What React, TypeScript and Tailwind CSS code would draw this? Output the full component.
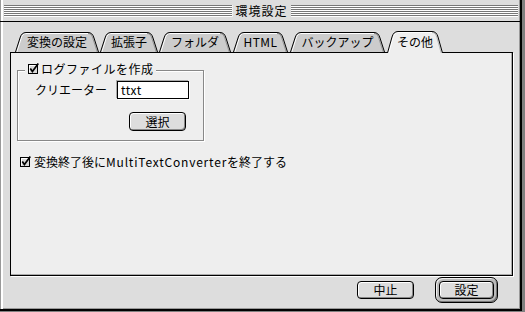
import React from "react";

const tabs = [
  { label: "変換の設定", w: 84, cls: "w-[84px] ml-0" },
  { label: "拡張子", w: 58, cls: "w-[58px] ml-[1px]" },
  { label: "フォルダ", w: 72, cls: "w-[72px] ml-[1px]" },
  { label: "HTML", w: 55, cls: "w-[55px] ml-[2px]" },
  { label: "バックアップ", w: 95, cls: "w-[95px] ml-[2px]" },
  { label: "その他", w: 56, cls: "w-[56px] ml-[2px]", selected: true },
];

function Tab({ label, w, cls, selected }: { label: string; w: number; cls: string; selected?: boolean }) {
  const H = selected ? 22 : 20;
  const d = `M0.5 ${H} L5 6 Q6.5 0.5 11 0.5 L${w - 11} 0.5 Q${w - 6.5} 0.5 ${w - 5} 6 L${w - 0.5} ${H}`;
  const hl = `M1.8 ${H} L6.2 6.3 Q7.5 1.5 11 1.5 L${w - 11} 1.5`;
  const sh = `M${w - 11} 1.5 Q${w - 7.5} 1.5 ${w - 6.2} 6.3 L${w - 1.8} ${H}`;
  return (
    <div
      className={`relative flex items-center justify-center shrink-0 ${cls} ${
        selected ? "h-[22px] -mb-[1px] z-10" : "h-[20px]"
      }`}
    >
      <svg className="absolute inset-0" width={w} height={H} viewBox={`0 0 ${w} ${H}`}>
        <path d={d + " Z"} fill={selected ? "#eeeeee" : "#cccccc"} stroke="none" />
        <path d={hl} fill="none" stroke="#ffffff" strokeWidth="1" />
        <path d={sh} fill="none" stroke={selected ? "#bbbbbb" : "#999999"} strokeWidth="1" />
        <path d={d} fill="none" stroke="#000" strokeWidth="1" />
      </svg>
      <span className={`relative text-[12px] leading-none text-black ${label === "HTML" ? "tracking-[0.5px]" : ""}`}>
        {label}
      </span>
    </div>
  );
}

function Check() {
  return (
    <svg width="12" height="12" viewBox="0 0 12 12" className="shrink-0">
      <rect x="0.5" y="1.5" width="9" height="9" fill="#d8d8d8" stroke="#000" />
      <path d="M1.5 9.5 V2.5 H8.5" stroke="#fff" fill="none" />
      <path d="M2.3 5.6 L4.4 8.6 L10.3 0.6" stroke="#000" strokeWidth="1.7" fill="none" />
    </svg>
  );
}

function Button({ label, cls }: { label: string; cls: string }) {
  return (
    <div
      className={`flex items-center justify-center rounded-[4px] border border-black bg-[#dddddd] shadow-[inset_1px_1px_0_#ffffff,inset_-1px_-1px_0_#888888] text-[12px] leading-none text-black ${cls}`}
    >
      {label}
    </div>
  );
}

export default function App() {
  return (
    <div className="w-[525px] h-[312px] bg-[#808080] font-['Noto_Sans_CJK_JP',sans-serif]">
      <div className="w-[522px] h-[311px] bg-[#dddddd] border-r-2 border-b-2 border-black flex flex-col shadow-[inset_1px_0_0_#999999,inset_3px_0_0_#ffffff,inset_-1px_-1px_0_#999999]">
        {/* title bar */}
        <div className="h-[22px] shrink-0 border-b border-black flex items-center pl-[4px] pr-[2px]">
          <div className="flex-1 h-[12px] bg-[repeating-linear-gradient(to_bottom,#777777_0px,#777777_1px,#ffffff_1px,#ffffff_2px)] border-r border-[#eeeeee]" />
          <div className="px-[3px] text-[12px] leading-none tracking-[1px] text-black">環境設定</div>
          <div className="flex-1 h-[12px] bg-[repeating-linear-gradient(to_bottom,#777777_0px,#777777_1px,#ffffff_1px,#ffffff_2px)]" />
        </div>

        {/* content */}
        <div className="flex-1 flex flex-col pl-[10px] pr-[7px] pt-[9px]">
          <div className="relative z-10 flex items-end h-[21px] pl-[5px]">
            {tabs.map((t) => (
              <Tab key={t.label} {...t} />
            ))}
          </div>

          <div className="h-[224px] shrink-0 border border-black bg-[#eeeeee] shadow-[inset_-1px_-1px_0_#aaaaaa,1px_1px_0_#ffffff] flex flex-col items-start">
            {/* group box */}
            <div className="ml-[6px] mt-[17px] w-[187px] h-[71px] border border-[#888888] shadow-[inset_1px_1px_0_#ffffff,1px_1px_0_#ffffff] flex flex-col items-start">
              <div className="-mt-[8px] ml-[7px] h-[12px] flex items-center gap-[1px] pl-[3px] pr-[2px] bg-[#eeeeee]">
                <Check />
                <span className="text-[12px] leading-none tracking-[0.5px] text-black">ログファイルを作成</span>
              </div>
              <div className="mt-[6px] ml-[17px] flex items-center">
                <span className="w-[82px] text-[12px] leading-none text-black">クリエーター</span>
                <div className="w-[72px] h-[18px] border border-black bg-white flex items-center pl-[3px] text-[12px] leading-none tracking-[0.5px] text-black shadow-[1px_1px_0_#ffffff,-1px_-1px_0_#aaaaaa]">
                  ttxt
                </div>
              </div>
              <Button label="選択" cls="mt-[13px] ml-[111px] w-[57px] h-[19px]" />
            </div>

            <div className="mt-[15px] ml-[9px] h-[12px] flex items-center gap-[2px]">
              <Check />
              <span className="text-[12px] leading-none text-black">
                変換終了後に<span className="tracking-[0.8px]">MultiTextConverter</span>を終了する
              </span>
            </div>
          </div>

          {/* buttons */}
          <div className="mt-[1px] h-[26px] flex items-center justify-end gap-[21px] pr-[15px]">
            <Button label="中止" cls="w-[57px] h-[18px]" />
            <div className="w-[63px] h-[26px] rounded-[7px] border border-black bg-[#bbbbbb] shadow-[inset_1px_1px_0_#eeeeee,inset_-1px_-1px_0_#777777] p-[3px]">
              <Button label="設定" cls="w-full h-full" />
            </div>
          </div>
        </div>
      </div>
    </div>
  );
}
